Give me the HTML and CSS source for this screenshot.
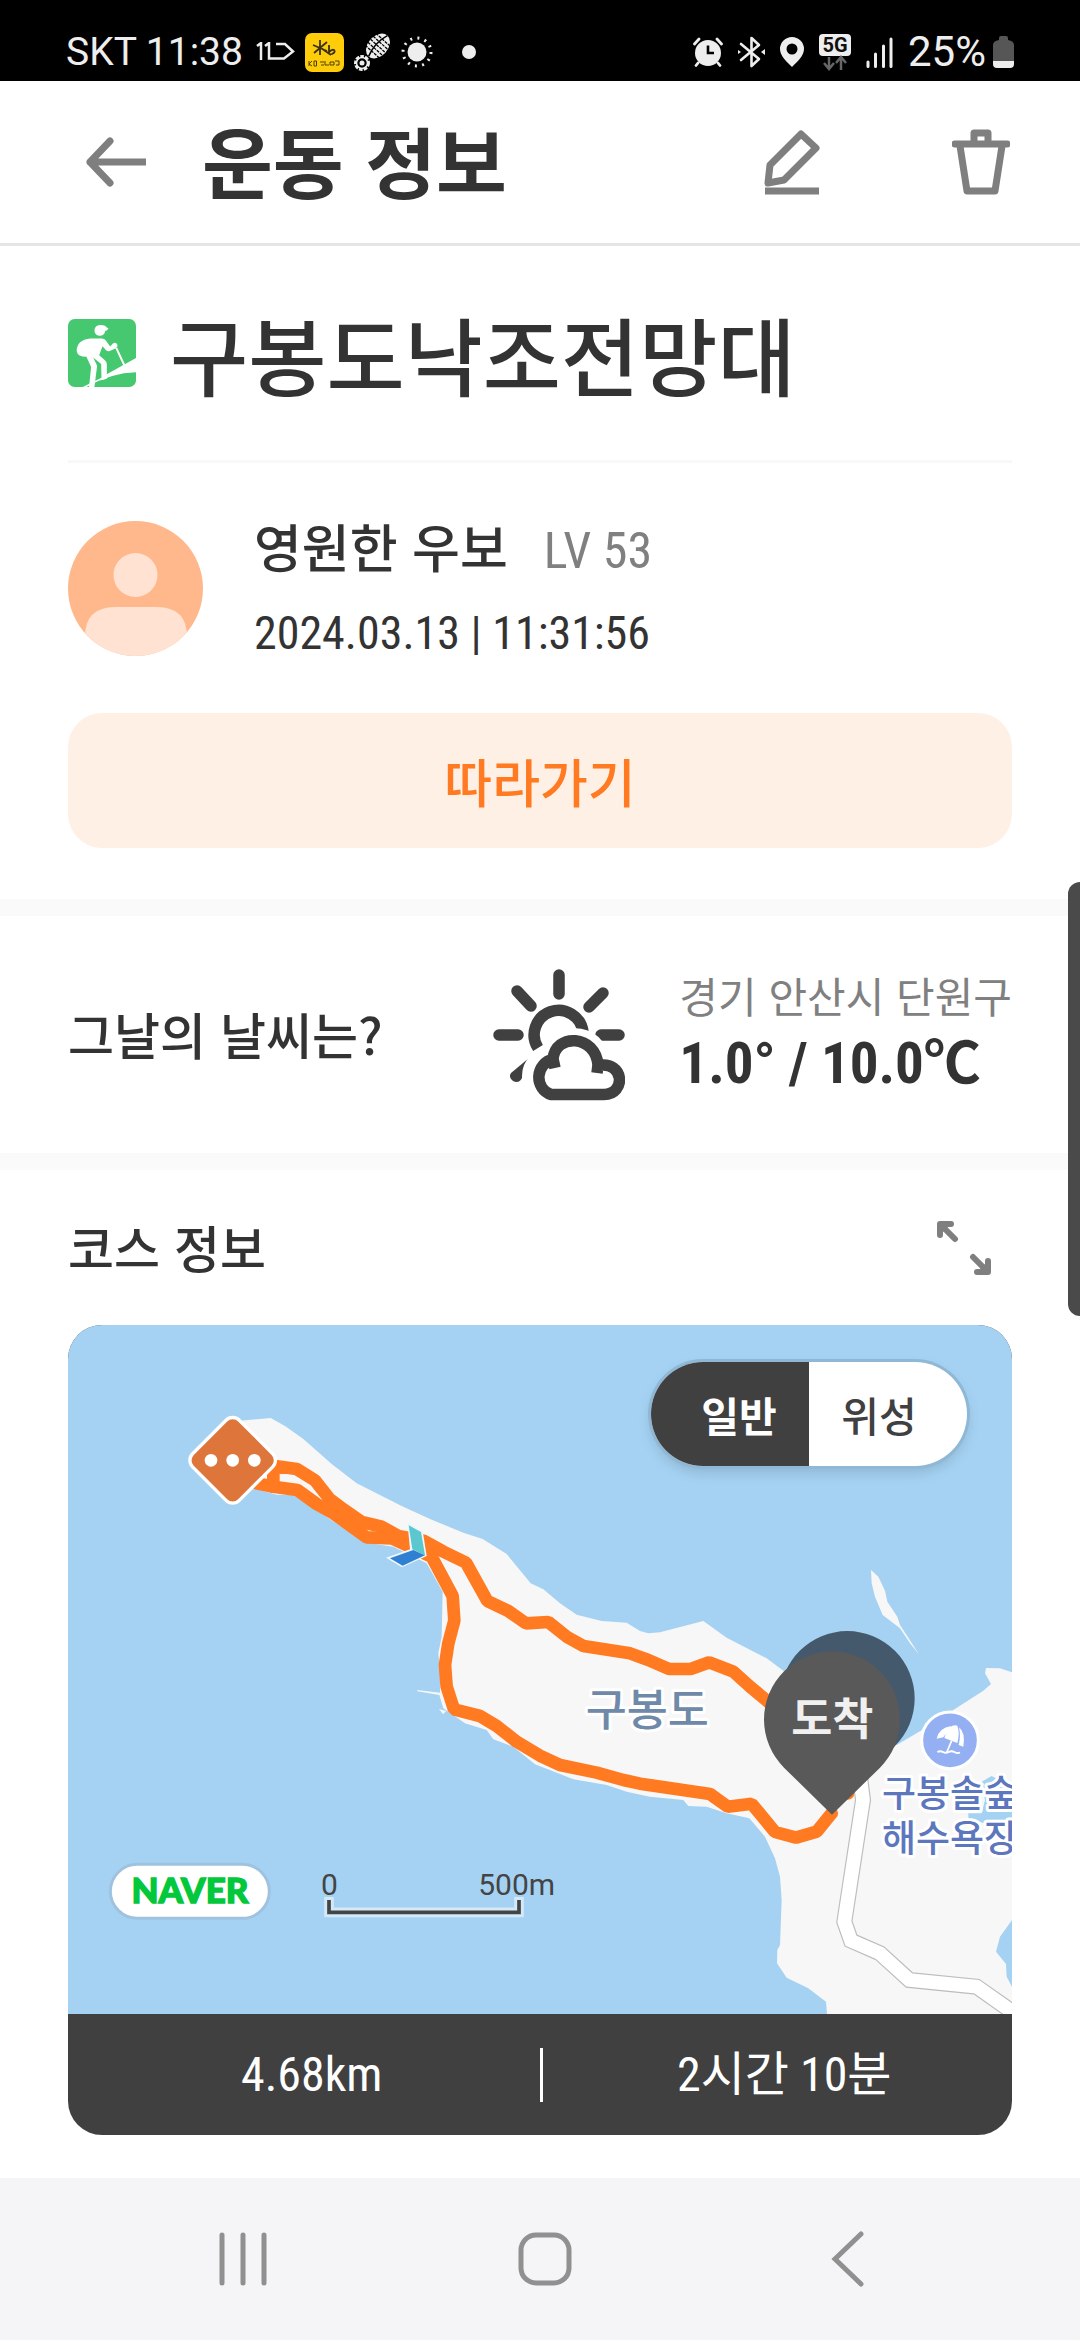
FILE: index.html
```html
<!DOCTYPE html>
<html lang="ko">
<head>
<meta charset="utf-8">
<meta name="viewport" content="width=device-width, initial-scale=1">
<title>운동 정보</title>
<link rel="stylesheet" href="styles.css">
</head>
<body>
<div class="screen">
  <div class="status">
    <div class="status-group status-left">
      <span class="status-text">SKT 11:38</span>
      <svg class="ic-eleven" viewBox="0 0 40 20" aria-hidden="true"><path d="M1 4 5 1v17M9 4l4-3v15.500h15L37 9.500 29 2h-9" fill="none" stroke="#eee" stroke-width="2.500"/></svg>
      <svg class="ic-kb" viewBox="0 0 39 39" aria-hidden="true"><rect width="39" height="39" rx="7" fill="#ffcc0a"/><path d="M15 7v15M8 12l14 6M22 9 9 20M16 15l10 7M24 12v8q0 2 3 1 4-2 2-4-2-1-5 2" fill="none" stroke="#3a3216" stroke-width="1.800"/><path d="M4 28v5M7 28l-3 3 3 2M9 28v5h2.500v-5zM15 29h4M16 32h3M20 28v4h4M25 29h4v3h-4zM30 28h4v4h-3" fill="none" stroke="#4d4010" stroke-width="1"/></svg>
      <svg class="ic-shoe" viewBox="0 0 39 39" aria-hidden="true"><g transform="rotate(42 25 13)"><ellipse cx="25" cy="13" rx="10" ry="14" fill="#eee"/><path d="M15 5h20M15 9h20M15 13h20M15 17h20M15 21h20" stroke="#000" stroke-width="1.300" stroke-dasharray="3 1"/><path d="M25-1q-5 14 0 28" stroke="#000" stroke-width="1.500" fill="none"/></g><circle cx="9" cy="30" r="6.500" fill="none" stroke="#eee" stroke-width="3" stroke-dasharray="3.500 1.200"/><circle cx="9" cy="30" r="5.500" fill="none" stroke="#eee" stroke-width="1.500"/><circle cx="9" cy="30" r="2.500" fill="#eee"/></svg>
      <svg class="ic-sun" viewBox="-16 -16 32 32" aria-hidden="true"><circle r="9.500" fill="#eee"/><circle r="14" fill="none" stroke="#eee" stroke-width="3" stroke-dasharray="2 5.330"/></svg>
      <span class="dot"></span>
    </div>
    <div class="status-group status-right">
      <svg class="ic-alarm" viewBox="0 0 30 30" aria-hidden="true"><circle cx="15" cy="16" r="13" fill="#eee"/><path d="M1.500 7 6 2M28.500 7 24 2M5 26l-2 2.500M25 26l2 2.500" stroke="#eee" stroke-width="2.800" stroke-linecap="round"/><path d="M15 8.500V16h6" fill="none" stroke="#000" stroke-width="2.600"/></svg>
      <svg class="ic-bt" viewBox="0 0 27 32" aria-hidden="true"><path d="m3 8 18 15-7.500 7V2L21 9 3 24" fill="none" stroke="#eee" stroke-width="2.600" stroke-linejoin="round" stroke-linecap="round"/><path d="m0 14 3 2-3 2zM27 13l-4 3 4 3z" fill="#eee"/></svg>
      <svg class="ic-pin" viewBox="0 0 24 30" aria-hidden="true"><path fill-rule="evenodd" d="M12 0a12 12 0 0 1 12 12c0 7-7 13-12 18C7 25 0 19 0 12A12 12 0 0 1 12 0zm0 6.500a5.500 5.500 0 1 0 0 11 5.500 5.500 0 0 0 0-11z" fill="#eee"/></svg>
      <svg class="ic-5g" viewBox="0 0 32 37" aria-hidden="true"><rect width="32" height="22" rx="4" fill="#eee"/><text x="16" y="18" class="five-g">5G</text><path d="M10 23v11m-5-5 5 6 5-6M22 36V24m-5 5 5-6 5 6" fill="none" stroke="#666" stroke-width="2.500"/></svg>
      <svg class="ic-signal" viewBox="0 0 27 31" aria-hidden="true"><path d="M2 25v4.500M9.500 17v12.500M17.500 9v20.500M25 2v27.500" stroke="#eee" stroke-width="3" stroke-linecap="round"/></svg>
      <span class="status-text battery">25%</span>
      <svg class="ic-batt" viewBox="0 0 21 32" aria-hidden="true"><path d="M6 4V2q0-2 2-2h5q2 0 2 2v2q6 1 6 5v17H0V9q0-4 6-5z" fill="#565656"/><path d="M0 25h21v3q0 4-4 4H4q-4 0-4-4z" fill="#eee"/></svg>
    </div>
  </div>

  <header class="appbar">
    <button class="icon-btn" aria-label="뒤로"><svg class="ic-back" viewBox="0 0 60 50"><path d="M60 25H4M24 4 4 25l20 21" class="line-grey"/></svg></button>
    <h1 class="appbar-title">운동 정보</h1>
    <button class="icon-btn" aria-label="수정"><svg class="ic-edit" viewBox="0 0 56 66"><path d="M37 5 52 19 20 51 4 54 6 36z" class="line-grey"/><path d="M1 62h54" class="line-grey flat"/></svg></button>
    <button class="icon-btn" aria-label="삭제"><svg class="ic-trash" viewBox="0 0 58 66"><path d="M3 15h52M8 17l7 45h28l7-45M22 14V4h14v10" class="line-grey"/></svg></button>
  </header>

  <main>
    <section class="summary">
      <div class="title-row">
        <svg class="sport" viewBox="18 18 203 203" aria-hidden="true"><rect x="18" y="18" width="203" height="203" rx="20" fill="#46c870"/><path d="M60 222 73 221Q150 178 222 177V134L135 182 121 192z" fill="#fff"/><circle cx="113" cy="52" r="16" fill="#fff"/><path d="M113 36q16 0 20 7l6 3-6 7h-14z" fill="#fff"/><path d="M92 76h28q8 0 12 8l12 16 8-9q9-5 13 3 3 9-6 12l-18 8q-8 1-12-6l-8-9-10 27 18 16q5 4 5 12v42l-16 5-1-49-24-19 10 20q3 5 1 12l-7 55-17 9 7-68-14-30q-26 0-29-17 0-34 41-38z" fill="#fff"/><path d="m162 104 25 54" stroke="#fff" stroke-width="6"/></svg>
        <h2 class="course-name">구봉도낙조전망대</h2>
      </div>
      <div class="user">
        <svg class="avatar" viewBox="0 0 135 135" aria-hidden="true"><clipPath id="face"><circle cx="67.500" cy="67.500" r="67.500"/></clipPath><g clip-path="url(#face)"><path d="M0 0h135v135H0z" fill="#ffb88c"/><circle cx="67.500" cy="54" r="22" fill="#ffe2d1"/><path d="M17 135v-19q0-30 30-30h42q30 0 30 30v19z" fill="#ffe2d1"/></g></svg>
        <div class="user-text">
          <p class="name">영원한 우보<span class="level">LV 53</span></p>
          <p class="date">2024.03.13 | 11:31:56</p>
        </div>
      </div>
      <button class="follow">따라가기</button>
    </section>

    <section class="weather">
      <h3 class="section-title">그날의 날씨는?</h3>
      <svg class="ic-weather" viewBox="0 0 132 132" aria-hidden="true"><g fill="none" stroke="#404040" stroke-width="11.500" stroke-linecap="round" stroke-linejoin="round"><path d="M66 6v19M24 22l14 15M110 24 96 38M6 66h19"/><path d="M108 66h18"/><path d="M45 79A24.500 24.500 0 1 1 90 63" stroke-linecap="butt"/></g><path d="M36 89 29 109q-3 6-9 3-5-4-2-8z" fill="#404040"/><path d="M58 125a18 18 0 0 1 0-36h3a22 22 0 0 1 44 7 15 15 0 0 1 8 29z" fill="#fff" stroke="#fff" stroke-width="22"/><path d="M58 125.500a17 18 0 0 1 2-35c2-27 43-25 45 6 27-5 28 29 6 29zM60 90l2 9M105 96l-1 8" fill="#fff" stroke="#404040" stroke-width="11.500"/></svg>
      <div class="weather-text">
        <p class="place">경기 안산시 단원구</p>
        <p class="temp">1.0° / 10.0℃</p>
      </div>
    </section>

    <section class="course">
      <div class="course-head">
        <h3 class="section-title">코스 정보</h3>
        <button class="icon-btn" aria-label="지도 확대"><svg class="ic-expand" viewBox="0 0 56 56"><path d="M19 19 5 5M4 15V4h11M37 37l14 14M52 41v11H41" fill="none" stroke="#7f7f7f" stroke-width="6" stroke-linecap="round" stroke-linejoin="round"/><path d="M3 3h13L3 16zM53 53H40l13-13z" fill="#7f7f7f"/></svg></button>
      </div>
      <div class="map-card">
        <div class="map">
          <svg class="map-art" viewBox="24 15 2832 2067" preserveAspectRatio="xMidYMid slice" role="img" aria-label="구봉도 코스 지도">
            <g fill="#f7f7f7">
              <path d="M500 302 540 302 632 294 675 318 730 357 815 432 890 490 1025 558 1110 597 1210 638 1268 657 1340 702 1375 745 1412 790 1450 808 1500 850 1550 884 1625 903 1700 908 1740 933 1765 940 1800 937 1930 903 2000 953 2120 1015 2170 1052 2350 1240 2510 1275 2595 1225 2680 1170 2770 1112 2793 1092 2775 1060 2778 1044 2820 1045 2856 1057 2856 1800 2820 1850 2808 1895 2838 1932 2840 1970 2856 2000V2082H2301L2298 2045 2245 2005 2180 1973 2151 1930 2152 1890 2160 1875 2165 1740 2160 1670 2145 1615 2115 1550 2068 1495 2000 1480 1940 1460 1885 1458 1870 1440 1770 1430 1700 1415 1640 1395 1540 1378 1500 1362 1425 1333 1360 1280 1300 1258 1280 1230 1215 1210 1150 1165 1138 1125 1072 1114 1072 1110 1140 1118 1140 1050 1135 1000 1145 950 1148 815 1100 730 1000 680 920 668 810 598 720 525 650 524 580 505 500 480z"/>
              <path d="M2433 750 2455 770 2475 812 2482 845 2512 890 2520 915 2577 1003 2550 970 2520 925 2468 885 2445 830 2435 790zM1137 1167l22 6-10 10z"/>
            </g>
            <path d="M2765 1385 2795 1368 2856 1400V1525L2725 1500V1480H2765L2775 1440z" fill="#a5d2f3"/>
            <g fill="none" stroke-linejoin="miter">
              <path d="M2400 1370 2409 1440 2353 1805 2373 1862 2460 1900 2548 1980 2750 2000 2880 2092" stroke="#bdbdbd" stroke-width="48"/>
              <path d="M2400 1370 2409 1440 2353 1805 2373 1862 2460 1900 2548 1980 2750 2000 2880 2092" stroke="#fff" stroke-width="41"/>
            </g>
            <g fill="none" stroke="#ff7a21" stroke-width="38" stroke-linejoin="bevel" stroke-linecap="round">
              <path d="M640 500V437L710 447 765 481 808 536 850 568 905 606 965 620 1015 648 1090 662 1150 695 1218 728 1282 843 1345 873 1398 910 1465 906 1520 950 1570 978 1710 1000 1765 1020 1827 1047H1892L1948 1027 2020 1055 2070 1100 2130 1150 2250 1300 2364 1420"/>
              <path d="M590 490 640 500 712 510 770 552 820 580 920 652 995 655 1050 680 1115 710 1178 828 1183 902 1165 970 1155 1035 1160 1100 1182 1168 1260 1188 1310 1218 1370 1265 1440 1307 1500 1335 1610 1358 1690 1380 1740 1391 1950 1422 2003 1460 2075 1451 2145 1536 2208 1553 2270 1535 2315 1480"/>
            </g>
            <path d="M1042 606 1088 632 1100 708 1026 742 978 713 1050 688z" fill="#eef6fb"/>
            <path d="M1046 616 1083 636 1095 706 1057 688z" fill="#5bc8cf"/>
            <path d="M990 715 1060 690 1095 706 1028 737z" fill="#2f80d2"/>
            <g transform="translate(518 421)"><rect x="-99" y="-99" width="198" height="198" rx="28" transform="rotate(45)" fill="#de763c" stroke="#fff" stroke-width="10"/><g fill="#fff"><circle cx="-65" r="19"/><circle r="19"/><circle cx="65" r="19"/></g></g>
            <path d="M2362 1421 2219 1278a202 202 0 1 1 286 0z" fill="#45596d"/>
            <path d="M2316 1484 2172 1343a204 204 0 1 1 288 0z" fill="#595959"/>
            <text class="pin-label" x="2317" y="1244">도착</text>
            <text class="island-label" x="1762" y="1217">구봉도</text>
            <circle cx="2670" cy="1261" r="85" fill="#94b0f3" stroke="#fff" stroke-width="9"/>
            <g fill="#fff"><path d="M2630 1256q6-32 44-38l-24 34zM2653 1254q8-28 24-37 12-2 15 0 8 22 0 52zM2697 1222q20 16 13 58l-14-5q7-28 1-53z"/><path d="M2675 1262 2660 1298" stroke="#fff" stroke-width="5"/><path d="M2632 1296q9-5 17 0t17 0 17 0 17 2" fill="none" stroke="#fff" stroke-width="6"/></g>
            <text class="beach-label" x="2466" y="1462">구봉솔숲<tspan x="2466" dy="133">해수욕장</tspan></text>
            <rect x="151" y="1633" width="477" height="162" rx="81" fill="#fff" stroke="#9fc3df" stroke-width="9"/>
            <text class="naver" x="390" y="1750">NAVER</text>
            <text class="scale-label" x="808" y="1726">0</text>
            <text class="scale-label" x="1370" y="1726">500m</text>
            <path d="M807 1731v46H1377v-46" fill="none" stroke="#d3e8f8" stroke-width="29"/>
            <path d="M807 1740v37H1377v-37" fill="none" stroke="#444" stroke-width="11"/>
          </svg>
          <div class="map-toggle">
            <button class="seg seg-on" aria-pressed="true">일반</button>
            <button class="seg" aria-pressed="false">위성</button>
          </div>
        </div>
        <div class="stats">
          <span class="stat">4.68km</span>
          <span class="stat-rule"></span>
          <span class="stat">2시간 10분</span>
        </div>
      </div>
    </section>
  </main>

  <nav class="navbar">
    <button class="nav-btn" aria-label="최근 앱"><svg viewBox="0 0 56 56"><path d="M7 4v48M28 4v48M49 4v48" class="line-nav"/></svg></button>
    <button class="nav-btn" aria-label="홈"><svg viewBox="0 0 56 56"><rect x="4" y="4" width="48" height="48" rx="15" class="line-nav"/></svg></button>
    <button class="nav-btn" aria-label="이전"><svg viewBox="0 0 56 56"><path d="M41 3 15 28l26 25" class="line-nav"/></svg></button>
  </nav>
  <div class="scrollbar"></div>
</div>
</body>
</html>
```

FILE: styles.css
```css
* { box-sizing: border-box; }
body, h1, h2, h3, p { margin: 0; }
body {
  background: #fff;
  color: #333;
  font-family: "Noto Sans CJK KR", sans-serif;
}
button {
  margin: 0;
  padding: 0;
  border: 0;
  background: none;
  font-family: inherit;
  color: inherit;
}
svg { display: block; flex: none; }
.screen {
  position: relative;
  min-height: 100vh;
  display: flex;
  flex-direction: column;
}

/* status bar */
.status {
  height: 81px;
  padding: 24px 66px 0 66px;
  display: flex;
  justify-content: space-between;
  background: #000;
}
.status-group { display: flex; align-items: center; height: 56px; }
.status-left { gap: 9px; }
.status-right { gap: 15px; }
.status-text {
  font-family: Roboto, sans-serif;
  font-size: 39px;
  line-height: 56px;
  color: #eee;
}
.battery { font-size: 42px; }
.ic-eleven { width: 40px; height: 20px; margin-left: 4px; }
.ic-kb, .ic-shoe { width: 39px; height: 39px; }
.ic-sun { width: 32px; height: 32px; }
.dot { width: 14px; height: 14px; margin-left: 20px; border-radius: 50%; background: #eee; }
.ic-alarm { width: 30px; height: 30px; }
.ic-bt { width: 27px; height: 32px; }
.ic-pin { width: 24px; height: 30px; }
.ic-5g { width: 32px; height: 37px; }
.five-g { font: 700 20px Roboto, sans-serif; text-anchor: middle; fill: #111; }
.ic-signal { width: 27px; height: 31px; }
.ic-batt { width: 21px; height: 32px; margin-left: -8px; }

/* app bar */
.appbar {
  height: 165px;
  padding: 0 70px 0 86px;
  display: flex;
  align-items: center;
  border-bottom: 3px solid #e5e5e5;
}
.appbar-title {
  flex: 1;
  margin-left: 56px;
  padding-bottom: 4px;
  font-size: 77px;
  line-height: 100px;
  font-weight: 700;
}
.icon-btn + .icon-btn { margin-left: 132px; }
.ic-back { width: 60px; height: 50px; }
.ic-edit { width: 56px; height: 66px; }
.ic-trash { width: 58px; height: 66px; }
.line-grey { fill: none; stroke: #7f7f7f; stroke-width: 7; stroke-linejoin: round; stroke-linecap: round; }
.flat { stroke-linecap: butt; }

/* summary */
.summary { padding: 0 68px 51px; border-bottom: 17px solid #fafafa; }
.title-row {
  height: 217px;
  display: flex;
  align-items: center;
  gap: 34px;
  border-bottom: 3px solid #f8f8f8;
}
.sport { width: 68px; height: 68px; }
.course-name { font-size: 85px; line-height: 120px; font-weight: 500; }
.user { display: flex; align-items: center; gap: 51px; padding: 38px 0; }
.avatar { width: 135px; height: 135px; }
.name { font-size: 52px; line-height: 90px; font-weight: 500; }
.date, .level, .temp, .stat { font-family: "Roboto Condensed", "Noto Sans CJK KR", sans-serif; }
.level { margin-left: 36px; font-size: 50px; line-height: 60px; font-weight: 400; color: #808080; }
.date { font-size: 46px; line-height: 84px; }
.follow {
  display: block;
  width: 100%;
  height: 135px;
  border-radius: 34px;
  background: #fff0e6;
  color: #ff7a21;
  font-size: 52px;
  font-weight: 500;
}

/* weather */
.weather {
  height: 254px;
  padding: 0 68px;
  display: flex;
  align-items: center;
  border-bottom: 17px solid #fafafa;
}
.section-title { flex: 1; padding-bottom: 4px; font-size: 50px; line-height: 74px; font-weight: 500; }
.ic-weather { width: 132px; height: 132px; margin-right: 54px; }
.place { font-size: 42px; line-height: 58px; color: #808080; }
.temp { font-size: 57px; line-height: 80px; font-weight: 700; }

/* course */
.course { padding: 0 68px 43px; }
.course-head { height: 155px; padding-right: 20px; display: flex; align-items: center; }
.ic-expand { width: 56px; height: 56px; }
.map-card { border-radius: 34px; overflow: hidden; background: #404040; }
.map { position: relative; aspect-ratio: 944 / 689; background: #a5d2f3; }
.map-art { width: 100%; height: 100%; }
.pin-label, .island-label { font-size: 134px; font-weight: 500; text-anchor: middle; }
.pin-label { fill: #f0f0f0; font-weight: 700; }
.island-label { fill: #6f8aa8; }
.beach-label { font-size: 111px; font-weight: 500; fill: #5c77bd; }
.island-label, .beach-label { stroke: #fff; stroke-width: 18; stroke-linejoin: round; paint-order: stroke; }
.naver { font: 900 105px Lato, sans-serif; text-anchor: middle; fill: #03c83c; stroke: #03c83c; stroke-width: 4; }
.scale-label { font: 400 90px Roboto, sans-serif; text-anchor: middle; fill: #444; }
.map-toggle {
  position: absolute;
  top: 37px;
  right: 45px;
  display: flex;
  width: 316px;
  height: 104px;
  border-radius: 52px;
  overflow: hidden;
  background: #fff;
  box-shadow: 0 0 0 3px #8fb8d6, 0 6px 14px rgba(0, 0, 0, .15);
}
.seg { flex: 1; padding-right: 18px; font-size: 41px; line-height: 60px; font-weight: 500; color: #404040; }
.seg-on { padding: 0 0 0 18px; background: #404040; color: #fff; font-weight: 700; }
.stats { height: 121px; padding-left: 2px; display: flex; align-items: center; color: #fff; }
.stat { flex: 1; padding-left: 14px; font-size: 48px; line-height: 74px; text-align: center; }
.stat-rule { width: 3px; height: 54px; background: #fff; }

/* system navigation */
.navbar {
  flex: 1;
  min-height: 162px;
  padding: 0 81px 0 92px;
  display: flex;
  align-items: center;
  background: #f5f5f7;
}
.nav-btn { flex: 1; display: flex; justify-content: center; }
.nav-btn svg { width: 56px; height: 56px; }
.line-nav { fill: none; stroke: #909090; stroke-width: 5; stroke-linecap: round; }
.scrollbar {
  position: absolute;
  top: 882px;
  right: 0;
  width: 12px;
  height: 434px;
  border-radius: 12px 0 0 12px;
  background: #4a4a4a;
}
```
